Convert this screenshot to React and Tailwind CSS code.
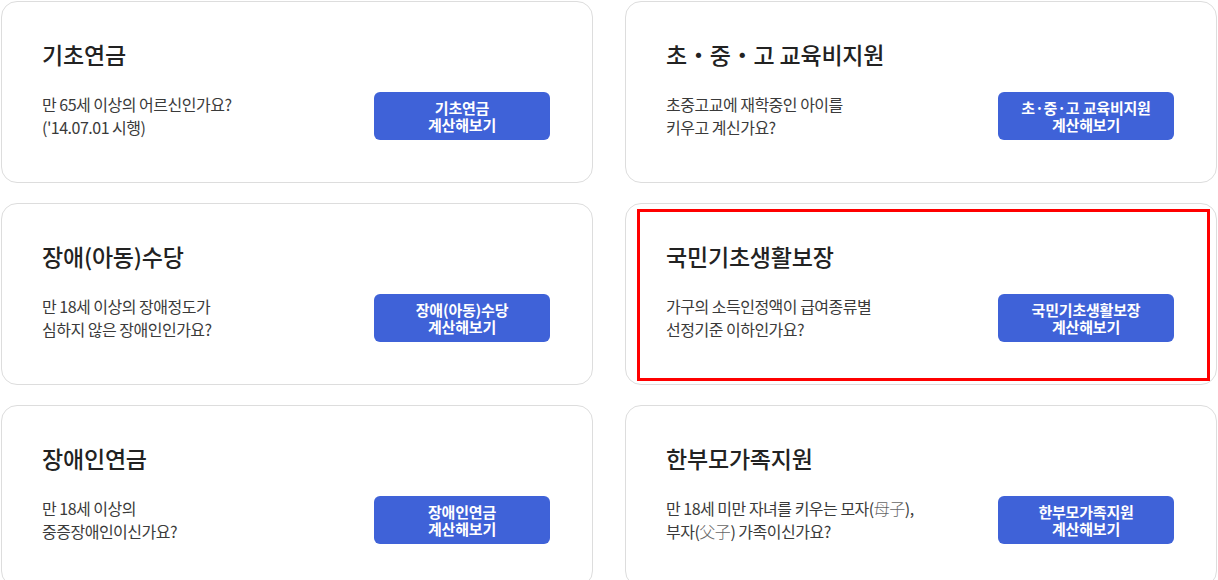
const cards = [
  {
    title: '기초연금',
    desc: ['만 65세 이상의 어르신인가요?', "('14.07.01 시행)"],
    button: '기초연금',
  },
  {
    title: '초・중・고 교육비지원',
    desc: ['초중고교에 재학중인 아이를', '키우고 계신가요?'],
    button: '초·중·고 교육비지원',
  },
  {
    title: '장애(아동)수당',
    desc: ['만 18세 이상의 장애정도가', '심하지 않은 장애인인가요?'],
    button: '장애(아동)수당',
  },
  {
    title: '국민기초생활보장',
    desc: ['가구의 소득인정액이 급여종류별', '선정기준 이하인가요?'],
    button: '국민기초생활보장',
    selected: true,
  },
  {
    title: '장애인연금',
    desc: ['만 18세 이상의', '중증장애인이신가요?'],
    button: '장애인연금',
  },
  {
    title: '한부모가족지원',
    desc: [
      <>만 18세 미만 자녀를 키우는 모자(<span className="font-light text-[#666]">母子</span>),</>,
      <>부자(<span className="font-light text-[#666]">父子</span>) 가족이신가요?</>,
    ],
    button: '한부모가족지원',
  },
];

function CalcCard({ title, desc, button, selected }) {
  return (
    <div className="relative h-[182px] rounded-[16px] border border-[#dddddd] bg-white pl-[40px] pr-[42px] pt-[34px]">
      <h3 className="text-[23px] font-medium leading-[36px] tracking-[-0.2px] text-[#222]">{title}</h3>
      <div className="mt-[20px] flex h-[48px] items-center justify-between">
        <p className="text-[16px] leading-[23px] tracking-[-0.5px] text-[#3a3a3a]">
          {desc.map((line, i) => (
            <span key={i} className="block">{line}</span>
          ))}
        </p>
        <button className="flex h-[48px] w-[176px] flex-col items-center justify-center rounded-[6px] bg-[#3f62d8] text-[15px] font-bold leading-[17px] tracking-[-0.2px] text-white">
          <span>{button}</span>
          <span>계산해보기</span>
        </button>
      </div>
      {selected && (
        <div className="pointer-events-none absolute left-[11px] right-[6px] top-[5px] bottom-[3px] border-[3px] border-[#ff0000]"></div>
      )}
    </div>
  );
}

export default function App() {
  return (
    <div
      className="min-h-[580px] bg-white pl-[1px] pt-[1px]"
      style={{ fontFamily: '"Noto Sans CJK KR", "Noto Sans", sans-serif' }}
    >
      <div className="grid w-[1216px] grid-cols-[592px_592px] gap-x-[32px] gap-y-[20px]">
        {cards.map((c, i) => (
          <CalcCard key={i} {...c} />
        ))}
      </div>
    </div>
  );
}
